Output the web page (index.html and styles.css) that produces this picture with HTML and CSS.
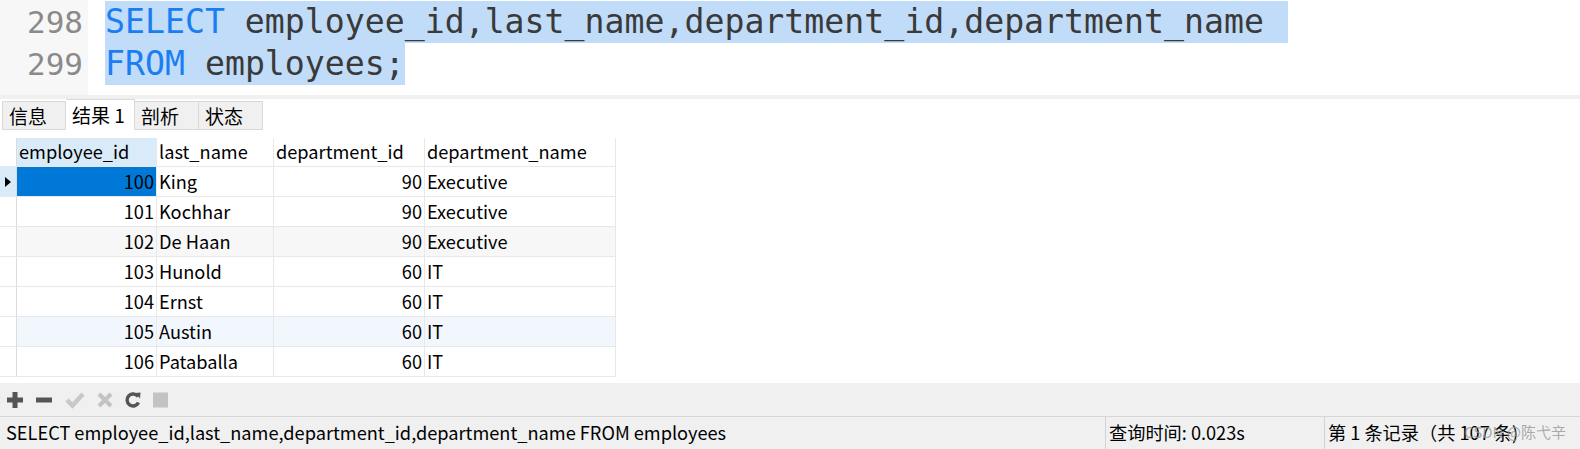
FILE: index.html
```html
<!DOCTYPE html>
<html lang="zh-CN">
<head>
<meta charset="utf-8">
<title>SQL result</title>
<link rel="stylesheet" href="styles.css">
</head>
<body>
<div class="app">
  <div class="editor">
    <div class="gutter">
      <div class="ln">298</div>
      <div class="ln">299</div>
    </div>
    <div class="code">
      <div class="line"><span class="sel l1"><span class="kw">SELECT</span> employee_id,last_name,department_id,department_name </span></div>
      <div class="line"><span class="sel"><span class="kw">FROM</span> employees;</span></div>
    </div>
  </div>
  <div class="strip"></div>
  <div class="tabs">
    <div class="tab">信息</div>
    <div class="tab active">结果 1</div>
    <div class="tab">剖析</div>
    <div class="tab">状态</div>
  </div>
  <div class="results">
    <div class="grid">
      <div class="c ind"></div>
      <div class="c h hsel">employee_id</div>
      <div class="c h">last_name</div>
      <div class="c h">department_id</div>
      <div class="c h">department_name</div>

      <div class="c ind indsel"><svg width="6" height="10" viewBox="0 0 6 10"><path d="M0 0 L6 5 L0 10 Z" fill="#000"/></svg></div>
      <div class="c num cursel">100</div>
      <div class="c">King</div>
      <div class="c num">90</div>
      <div class="c">Executive</div>

      <div class="c ind"></div>
      <div class="c num">101</div>
      <div class="c">Kochhar</div>
      <div class="c num">90</div>
      <div class="c">Executive</div>

      <div class="c ind"></div>
      <div class="c num alt">102</div>
      <div class="c alt">De Haan</div>
      <div class="c num alt">90</div>
      <div class="c alt">Executive</div>

      <div class="c ind"></div>
      <div class="c num">103</div>
      <div class="c">Hunold</div>
      <div class="c num">60</div>
      <div class="c">IT</div>

      <div class="c ind"></div>
      <div class="c num">104</div>
      <div class="c">Ernst</div>
      <div class="c num">60</div>
      <div class="c">IT</div>

      <div class="c ind"></div>
      <div class="c num hov">105</div>
      <div class="c hov">Austin</div>
      <div class="c num hov">60</div>
      <div class="c hov">IT</div>

      <div class="c ind"></div>
      <div class="c num">106</div>
      <div class="c">Pataballa</div>
      <div class="c num">60</div>
      <div class="c">IT</div>
    </div>
  </div>
  <div class="toolbar">
    <svg class="ico" width="18" height="18" viewBox="0 0 18 18"><path d="M9 1 V17 M1 9 H17" stroke="#555" stroke-width="5"/></svg>
    <svg class="ico" width="18" height="18" viewBox="0 0 18 18"><path d="M1 9 H17" stroke="#555" stroke-width="5"/></svg>
    <svg class="ico" width="20" height="18" viewBox="0 0 20 18"><path d="M2 9 L7.5 14.5 L18 3" fill="none" stroke="#c8c8c8" stroke-width="4.5"/></svg>
    <svg class="ico" width="16" height="18" viewBox="0 0 16 18"><path d="M2 3 L14 15 M14 3 L2 15" stroke="#c3c3c3" stroke-width="4"/></svg>
    <svg class="ico" width="16" height="18" viewBox="0 0 16 18"><path d="M13 5.5 A6 6 0 1 0 13.5 11.5" fill="none" stroke="#555" stroke-width="3.4"/><path d="M10 2 L15.5 1.5 L15 7.5 Z" fill="#555"/></svg>
    <svg class="ico" width="16" height="18" viewBox="0 0 16 18"><rect x="0" y="1.5" width="15" height="15" fill="#c3c3c3"/></svg>
  </div>
  <div class="status">
    <div class="sec s1">SELECT employee_id,last_name,department_id,department_name FROM employees</div>
    <div class="sec s2">查询时间: 0.023s</div>
    <div class="sec s3">第 1 条记录（共 107 条)</div>
    <div class="wm">CSDN @陈弋辛</div>
  </div>
</div>
</body>
</html>
```

FILE: styles.css
```css
* { box-sizing: border-box; }
html, body { margin: 0; padding: 0; background: #fff; }
body { width: 1580px; height: 449px; overflow: hidden; font-family: "Noto Sans CJK SC", "Noto Sans", sans-serif; color: #000; }
.app { display: flex; flex-direction: column; height: 449px; position: relative; }

.editor { display: flex; height: 95px; background: #fff; }
.gutter { width: 88px; background: #f7f7f7; padding-top: 1px; }
.ln { height: 42px; line-height: 42px; text-align: right; padding-right: 5px; font-family: "DejaVu Sans Mono", monospace; font-size: 31px; color: #8a8a8a; }
.code { padding-top: 1px; padding-left: 17px; font-family: "DejaVu Sans Mono", monospace; font-size: 33.2px; color: #3a3a3a; }
.line { height: 42px; line-height: 42px; white-space: pre; }
.sel { background: #c1dcf8; display: inline-block; height: 42px; }
.l1 { padding-right: 4px; }
.kw { color: #1a7ef2; }

.strip { height: 4px; background: #f0f0f0; }
.tabs { display: flex; align-items: flex-end; height: 31px; padding-left: 2px; background: #fff; }
.tab { height: 29px; padding: 0 0 0 6px; width: 64px; background: #f0f0f0; border: 1px solid #d9d9d9; border-left: none; font-size: 19px; line-height: 27px; color: #000; white-space: nowrap; }
.tab:first-child { border-left: 1px solid #d9d9d9; }
.tab.active { background: #fff; height: 31px; width: 69px; border-bottom: none; line-height: 29px; }

.results { flex: 1; background: #fff; padding-top: 8px; }
.grid { display: grid; grid-template-columns: 17px 140px 117px 151px 191px; grid-template-rows: 29px repeat(7, 30px); width: 616px; }
.c { border-right: 1px solid #e8e8e8; border-bottom: 1px solid #e8e8e8; font-size: 18.2px; line-height: 29px; padding: 0 2px 0 2px; white-space: nowrap; overflow: hidden; }
.h { line-height: 27px; }
.hsel { background: #d9eaf8; }
.num { text-align: right; }
.ind { border-right: 1px solid #dcdcdc; display: flex; align-items: center; justify-content: center; }
.indsel { background: #d9eaf8; }
.cursel { background: #0078d7; color: #000; }
.alt { background: #f7f7f7; }
.hov { background: #f2f7fd; }

.toolbar { height: 33px; background: #f0f0f0; display: flex; align-items: center; gap: 0; padding-left: 6px; }
.ico { display: block; margin-right: 12px; }
.ico:nth-child(2) { margin-left: -1px; }
.status { height: 33px; background: #f0f0f0; border-top: 1px solid #d6d6d6; display: flex; font-size: 18.2px; line-height: 30px; }
.sec { white-space: nowrap; }
.s1 { width: 1105px; padding-left: 6px; }
.s2 { width: 219px; border-left: 1px solid #d3d3d3; padding-left: 3px; }
.s3 { flex: 1; border-left: 1px solid #d3d3d3; padding-left: 3px; }
.wm { position: absolute; right: 14px; bottom: 2px; font-size: 15px; line-height: 31px; color: rgba(150,150,150,0.8); }
```
